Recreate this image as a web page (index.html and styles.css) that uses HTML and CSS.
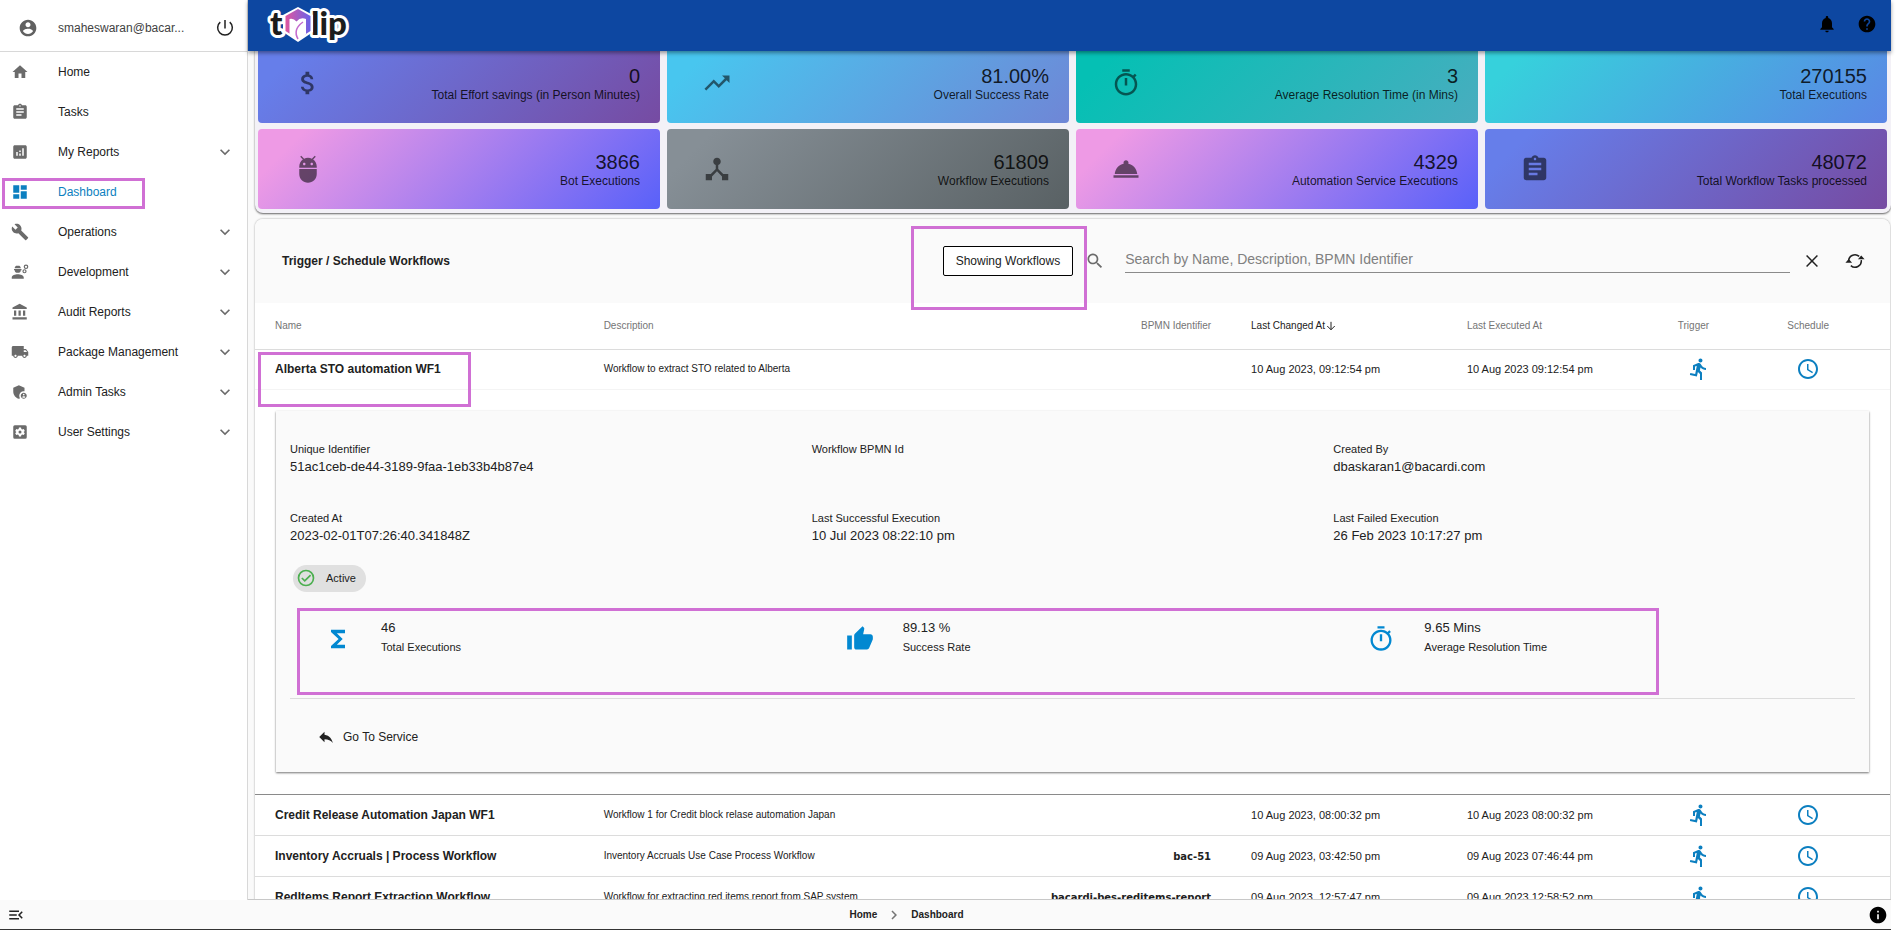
FILE: index.html
```html
<!DOCTYPE html>
<html lang="en">
<head>
<meta charset="utf-8">
<title>Dashboard</title>
<link rel="stylesheet" href="styles.css">
</head>
<body>
<svg class="sprite" aria-hidden="true">
  <symbol id="run" viewBox="0 0 24 24"><path d="M13.49 5.48c1.1 0 2-.9 2-2s-.9-2-2-2-2 .9-2 2 .9 2 2 2zm-3.6 13.9l1-4.4 2.1 2v6h2v-7.5l-2.1-2 .6-3c1.3 1.5 3.3 2.5 5.5 2.5v-2c-1.9 0-3.5-1-4.3-2.4l-1-1.6c-.4-.6-1-1-1.7-1-.3 0-.5.1-.8.1l-5.2 2.2v4.7h2v-3.4l1.8-.7-1.6 8.1-4.9-1-.4 2 7 1.4z"/></symbol>
  <symbol id="clock" viewBox="0 0 24 24"><path d="M11.99 2C6.47 2 2 6.48 2 12s4.47 10 9.99 10C17.52 22 22 17.52 22 12S17.52 2 11.99 2zM12 20c-4.42 0-8-3.58-8-8s3.58-8 8-8 8 3.58 8 8-3.58 8-8 8zm.5-13H11v6l5.25 3.15.75-1.23-4.5-2.67z"/></symbol>
  <symbol id="timer" viewBox="0 0 24 24"><path d="M15 1H9v2h6V1zm-4 13h2V8h-2v6zm8.03-6.61l1.42-1.42c-.43-.51-.9-.99-1.41-1.41l-1.42 1.42C16.07 4.74 14.12 4 12 4c-4.97 0-9 4.03-9 9s4.02 9 9 9 9-4.03 9-9c0-2.12-.74-4.07-1.97-5.61zM12 20c-3.87 0-7-3.13-7-7s3.13-7 7-7 7 3.13 7 7-3.13 7-7 7z"/></symbol>
  <symbol id="tasks" viewBox="0 0 24 24"><path d="M19 3h-4.18C14.4 1.84 13.3 1 12 1c-1.3 0-2.4.84-2.82 2H5c-1.1 0-2 .9-2 2v14c0 1.1.9 2 2 2h14c1.1 0 2-.9 2-2V5c0-1.1-.9-2-2-2zm-7 0c.55 0 1 .45 1 1s-.45 1-1 1-1-.45-1-1 .45-1 1-1zm2 14H7v-2h7v2zm3-4H7v-2h10v2zm0-4H7V7h10v2z"/></symbol>
  <symbol id="chev" viewBox="0 0 24 24"><path d="M7.4 8.6 12 13.2l4.6-4.6L18 10l-6 6-6-6z"/></symbol>
</svg>

<div class="app">
  <aside class="sidebar">
    <div class="user">
      <svg class="avatar" viewBox="0 0 24 24"><path d="M12 2C6.48 2 2 6.48 2 12s4.48 10 10 10 10-4.48 10-10S17.52 2 12 2zm0 3c1.66 0 3 1.34 3 3s-1.34 3-3 3-3-1.34-3-3 1.34-3 3-3zm0 14.2c-2.5 0-4.71-1.28-6-3.22.03-1.99 4-3.08 6-3.08 1.99 0 5.97 1.09 6 3.08-1.29 1.94-3.5 3.22-6 3.22z"/></svg>
      <span class="email">smaheswaran@bacar...</span>
      <button class="icon-btn" aria-label="Log out"><svg class="i20" viewBox="0 0 24 24"><path fill="none" stroke="currentColor" stroke-width="1.8" d="M12 2.5v10M6.3 5a8.800 8.800 0 1 0 11.400 0"/></svg></button>
    </div>
    <nav class="nav">
      <a href="#"><svg class="i18" viewBox="0 0 24 24"><path d="M10 20v-6h4v6h5v-8h3L12 3 2 12h3v8z"/></svg><span>Home</span></a>
      <a href="#"><svg class="i18"><use href="#tasks"/></svg><span>Tasks</span></a>
      <a href="#"><svg class="i18" viewBox="0 0 24 24"><path d="M19 3H5c-1.100 0-2 .9-2 2v14c0 1.100.9 2 2 2h14c1.100 0 2-.9 2-2V5c0-1.100-.9-2-2-2zM9 17H7v-5h2v5zm4 0h-2v-3h2v3zm0-5h-2v-2h2v2zm4 5h-2V7h2v10z"/></svg><span>My Reports</span><svg class="chev"><use href="#chev"/></svg></a>
      <a href="#" class="active" aria-current="page"><svg class="i18" viewBox="0 0 24 24"><path d="M3 13h8V3H3v10zm0 8h8v-6H3v6zm10 0h8V11h-8v10zm0-18v6h8V3h-8z"/></svg><span>Dashboard</span><i class="mark mark-nav"></i></a>
      <a href="#"><svg class="i18" viewBox="0 0 24 24"><path d="M22.700 19l-9.100-9.100c.9-2.300.4-5-1.500-6.900-2-2-5-2.400-7.400-1.300L9 6 6 9 1.600 4.700C.4 7.100.9 10.100 2.900 12.100c1.900 1.900 4.600 2.400 6.900 1.500l9.100 9.100c.4.4 1 .4 1.400 0l2.300-2.300c.5-.4.5-1.100.1-1.400z"/></svg><span>Operations</span><svg class="chev"><use href="#chev"/></svg></a>
      <a href="#"><svg class="i18" viewBox="0 0 24 24"><path d="M1 21v-1.800C1 16.500 5.500 15 9 15s8 1.500 8 4.200V21zM4 8h10v1.500h-1a4 3.500 0 0 1-8 0H4zM5 7c0-1.500.8-2.600 1.800-3.200h4.400C12.200 4.400 13 5.500 13 7z"/><circle cx="20" cy="5" r="2.300" fill="none" stroke="currentColor" stroke-width="1.600"/><circle cx="18" cy="11" r="2" fill="none" stroke="currentColor" stroke-width="1.600"/></svg><span>Development</span><svg class="chev"><use href="#chev"/></svg></a>
      <a href="#"><svg class="i18" viewBox="0 0 24 24"><path d="M4 10v7h3v-7H4zm6 0v7h3v-7h-3zM2 22h19v-3H2v3zm14-12v7h3v-7h-3zm-4.500-9L2 6v2h19V6l-9.500-5z"/></svg><span>Audit Reports</span><svg class="chev"><use href="#chev"/></svg></a>
      <a href="#"><svg class="i18" viewBox="0 0 24 24"><path d="M20 8h-3V4H3c-1.100 0-2 .9-2 2v11h2c0 1.660 1.340 3 3 3s3-1.340 3-3h6c0 1.660 1.340 3 3 3s3-1.340 3-3h2v-5l-3-4zM6 18.500c-.83 0-1.500-.67-1.500-1.500s.67-1.500 1.500-1.500 1.500.67 1.500 1.500-.67 1.500-1.500 1.500zm13.500-9l1.960 2.500H17V9.500h2.500zm-1.500 9c-.83 0-1.500-.67-1.500-1.500s.67-1.500 1.500-1.500 1.500.67 1.500 1.500-.67 1.500-1.500 1.500z"/></svg><span>Package Management</span><svg class="chev"><use href="#chev"/></svg></a>
      <a href="#"><svg class="i18" viewBox="0 0 24 24"><path d="M17 11c.34 0 .67.040 1 .09V6.270L10.500 3 3 6.270v4.910c0 4.540 3.200 8.790 7.500 9.820.55-.13 1.080-.32 1.600-.55-.69-.98-1.100-2.170-1.100-3.450 0-3.310 2.690-6 6-6zm0 2c-2.210 0-4 1.790-4 4s1.790 4 4 4 4-1.790 4-4-1.790-4-4-4zm0 1.380c.62 0 1.120.51 1.120 1.120s-.51 1.120-1.120 1.120-1.120-.51-1.120-1.120.5-1.120 1.120-1.120zm0 5.370c-.93 0-1.740-.46-2.240-1.170.05-.72 1.510-1.080 2.240-1.080s2.190.36 2.240 1.080c-.5.71-1.310 1.170-2.240 1.170z"/></svg><span>Admin Tasks</span><svg class="chev"><use href="#chev"/></svg></a>
      <a href="#"><svg class="i18" viewBox="0 0 24 24"><path fill-rule="evenodd" d="M5 3h14a2 2 0 0 1 2 2v14a2 2 0 0 1-2 2H5a2 2 0 0 1-2-2V5a2 2 0 0 1 2-2zm5.600 3-.4 2.100-1.200.7-2-.7-1.400 2.400L7.200 12l-1.600 1.500L7 15.900l2-.7 1.200.7.4 2.100h2.800l.4-2.100 1.200-.7 2 .7 1.400-2.400-1.600-1.500 1.600-1.500L17 8.100l-2 .7-1.200-.7-.4-2.100zM12 10a2 2 0 1 1 0 4 2 2 0 0 1 0-4z"/></svg><span>User Settings</span><svg class="chev"><use href="#chev"/></svg></a>
    </nav>
  </aside>

  <div class="main">
    <header class="topbar">
      <svg class="logo" viewBox="0 0 84 42" role="img" aria-label="tulip">
        <defs><linearGradient id="hex" x1="0" x2="1"><stop offset="0" stop-color="#e0559f"/><stop offset="1" stop-color="#6a62e8"/></linearGradient></defs>
        <g class="logo-text"><text x="3" y="31">t</text><text x="44" y="31">lip</text></g>
        <path d="M31 3 46 11v17L31 38 16 28V11z" fill="#fff"/>
        <path d="M31 5 43.500 12v15L31 35 18.500 27V12z" fill="url(#hex)"/>
        <path d="M22.500 15q4-1 7 2.500 4-5 9.500-2.500v15l-8 7-8.500-7z" fill="#fff"/>
        <path d="M31 35c-3.500-6-2-12 5-17" fill="none" stroke="#c46ccf" stroke-width="1.500"/>
      </svg>
      <div class="top-actions">
        <button class="icon-btn" aria-label="Notifications"><svg class="i20" viewBox="0 0 24 24"><path d="M12 22c1.100 0 2-.9 2-2h-4c0 1.100.89 2 2 2zm6-6v-5c0-3.070-1.640-5.640-4.500-6.320V4c0-.83-.67-1.500-1.500-1.500s-1.500.67-1.500 1.500v.68C7.630 5.360 6 7.920 6 11v5l-2 2v1h16v-1l-2-2z"/></svg></button>
        <button class="icon-btn" aria-label="Help"><svg class="i20" viewBox="0 0 24 24"><path d="M12 2C6.480 2 2 6.480 2 12s4.480 10 10 10 10-4.480 10-10S17.520 2 12 2zm1 17h-2v-2h2v2zm2.070-7.750l-.9.920C13.450 12.900 13 13.500 13 15h-2v-.5c0-1.100.45-2.100 1.170-2.830l1.240-1.260c.37-.36.59-.86.59-1.410 0-1.100-.9-2-2-2s-2 .9-2 2H8c0-2.210 1.790-4 4-4s4 1.790 4 4c0 .88-.36 1.680-.93 2.250z"/></svg></button>
      </div>
    </header>

    <main class="content">
      <section class="kpis">
        <article class="kpi g-violet"><svg viewBox="0 0 24 24"><path d="M11.800 10.900c-2.270-.59-3-1.200-3-2.150 0-1.090 1.010-1.850 2.700-1.850 1.780 0 2.440.85 2.500 2.100h2.210c-.07-1.720-1.120-3.300-3.210-3.810V3h-3v2.160c-1.940.42-3.500 1.680-3.500 3.610 0 2.310 1.910 3.460 4.700 4.130 2.500.6 3 1.480 3 2.410 0 .69-.49 1.790-2.700 1.790-2.060 0-2.870-.92-2.980-2.100h-2.200c.12 2.190 1.760 3.420 3.680 3.830V21h3v-2.150c1.950-.37 3.500-1.500 3.500-3.550 0-2.840-2.430-3.810-4.700-4.400z"/></svg><div><b>0</b><span>Total Effort savings (in Person Minutes)</span></div></article>
        <article class="kpi g-sky"><svg viewBox="0 0 24 24"><path d="M16 6l2.290 2.290-4.880 4.880-4-4L2 16.590 3.410 18l6-6 4 4 6.300-6.290L22 12V6z"/></svg><div><b>81.00%</b><span>Overall Success Rate</span></div></article>
        <article class="kpi g-teal"><svg><use href="#timer"/></svg><div><b>3</b><span>Average Resolution Time (in Mins)</span></div></article>
        <article class="kpi g-cyan"><svg></svg><div><b>270155</b><span>Total Executions</span></div></article>
        <article class="kpi g-pink"><svg viewBox="0 0 24 24"><path d="M5 16c0 3.870 3.130 7 7 7s7-3.130 7-7v-4H5v4zM16.120 4.370l2.100-2.100-.82-.83-2.300 2.310C14.160 3.280 13.120 3 12 3s-2.160.28-3.090.75L6.600 1.440l-.82.83 2.100 2.100C6.140 5.640 5 7.680 5 10v1h14v-1c0-2.320-1.140-4.360-2.880-5.630zM9 9c-.55 0-1-.45-1-1s.45-1 1-1 1 .45 1 1-.45 1-1 1zm6 0c-.55 0-1-.45-1-1s.45-1 1-1 1 .45 1 1-.45 1-1 1z"/></svg><div><b>3866</b><span>Bot Executions</span></div></article>
        <article class="kpi g-grey"><svg viewBox="0 0 24 24"><path d="M17 16l-4-4V8.820C14.160 8.400 15 7.300 15 6c0-1.660-1.340-3-3-3S9 4.340 9 6c0 1.300.84 2.400 2 2.820V12l-4 4H3v5h5v-3.050l4-4.200 4 4.200V21h5v-5h-4z"/></svg><div><b>61809</b><span>Workflow Executions</span></div></article>
        <article class="kpi g-pink"><svg viewBox="0 0 24 24"><path d="M2 17h20v2H2zm11.840-9.210c.1-.24.16-.51.16-.79 0-1.100-.9-2-2-2s-2 .9-2 2c0 .28.06.55.16.79C6.250 8.600 3.270 11.930 3 16h18c-.27-4.070-3.250-7.400-7.160-8.210z"/></svg><div><b>4329</b><span>Automation Service Executions</span></div></article>
        <article class="kpi g-violet"><svg><use href="#tasks"/></svg><div><b>48072</b><span>Total Workflow Tasks processed</span></div></article>
      </section>

      <section class="panel">
        <div class="toolbar">
          <h1>Trigger / Schedule Workflows</h1>
          <div class="toggle"><button class="outlined">Showing Workflows</button><i class="mark mark-toggle"></i></div>
          <label for="q" class="search-icon" aria-label="Search"><svg class="i20" viewBox="0 0 24 24"><path d="M15.500 14h-.79l-.28-.27C15.410 12.590 16 11.110 16 9.500 16 5.910 13.090 3 9.500 3S3 5.910 3 9.500 5.910 16 9.500 16c1.610 0 3.090-.59 4.230-1.570l.27.28v.79l5 4.990L20.490 19l-4.990-5zm-6 0C7.010 14 5 11.990 5 9.500S7.010 5 9.500 5 14 7.010 14 9.500 11.990 14 9.500 14z"/></svg></label>
          <input id="q" class="search" type="text" placeholder="Search by Name, Description, BPMN Identifier">
          <button class="icon-btn" aria-label="Clear"><svg class="i20" viewBox="0 0 24 24"><path fill="none" stroke="currentColor" stroke-width="1.800" d="M5.500 5.500l13 13M18.500 5.500l-13 13"/></svg></button>
          <button class="icon-btn" aria-label="Refresh"><svg class="i20" viewBox="0 0 24 24"><path fill="none" stroke="currentColor" stroke-width="1.800" d="M4.500 13a7.500 7.500 0 0 1 12.500-6.500M19.500 11a7.500 7.500 0 0 1-12.500 6.500"/><path d="M.5 14h8l-4-4.500zM15.500 10h8l-4-4.500z" transform="translate(0 0)"/></svg></button>
        </div>
        <table class="flows">
          <colgroup><col class="c-name"><col class="c-desc"><col class="c-bpmn"><col class="c-changed"><col class="c-exec"><col class="c-trig"><col class="c-sched"></colgroup>
          <thead><tr><th>Name</th><th>Description</th><th class="right">BPMN Identifier</th><th class="sorted">Last Changed At<svg class="sort" viewBox="0 0 12 12"><path fill="none" stroke="currentColor" stroke-width="1.200" d="M6 1v9.500M1.500 6 6 10.500 10.500 6"/></svg></th><th>Last Executed At</th><th>Trigger</th><th>Schedule</th></tr></thead>
          <tbody>
            <tr class="open"><td class="name"><span>Alberta STO automation WF1</span><i class="mark mark-name"></i></td><td class="desc">Workflow to extract STO related to Alberta</td><td class="bpmn"></td><td>10 Aug 2023, 09:12:54 pm</td><td>10 Aug 2023 09:12:54 pm</td><td><button class="act" aria-label="Trigger"><svg><use href="#run"/></svg></button></td><td><button class="act" aria-label="Schedule"><svg><use href="#clock"/></svg></button></td></tr>
            <tr class="expanded"><td colspan="7">
              <div class="detail">
                <dl class="facts">
                  <div><dt>Unique Identifier</dt><dd>51ac1ceb-de44-3189-9faa-1eb33b4b87e4</dd></div>
                  <div><dt>Workflow BPMN Id</dt><dd></dd></div>
                  <div><dt>Created By</dt><dd>dbaskaran1@bacardi.com</dd></div>
                  <div><dt>Created At</dt><dd>2023-02-01T07:26:40.341848Z</dd></div>
                  <div><dt>Last Successful Execution</dt><dd>10 Jul 2023 08:22:10 pm</dd></div>
                  <div><dt>Last Failed Execution</dt><dd>26 Feb 2023 10:17:27 pm</dd></div>
                </dl>
                <span class="chip"><svg class="i20" viewBox="0 0 24 24"><circle cx="12" cy="12" r="9" fill="none" stroke="currentColor" stroke-width="2"/><path fill="none" stroke="currentColor" stroke-width="2" d="M7 12l3.500 3.500L17.500 8.500"/></svg>Active</span>
                <div class="stats">
                  <div class="stat"><svg viewBox="0 0 24 24"><path d="M18 4H6v2l6.500 6L6 18v2h12v-3h-7l5-5-5-5h7z"/></svg><p><b>46</b><span>Total Executions</span></p></div>
                  <div class="stat"><svg viewBox="0 0 24 24"><path d="M1 21h4V9H1v12zm22-11c0-1.100-.9-2-2-2h-6.310l.95-4.570.03-.32c0-.41-.17-.79-.44-1.060L14.170 1 7.590 7.590C7.220 7.950 7 8.450 7 9v10c0 1.100.9 2 2 2h9c.83 0 1.540-.5 1.840-1.220l3.020-7.050c.09-.23.14-.47.14-.73v-2z"/></svg><p><b>89.13 %</b><span>Success Rate</span></p></div>
                  <div class="stat"><svg><use href="#timer"/></svg><p><b>9.65 Mins</b><span>Average Resolution Time</span></p></div>
                  <i class="mark mark-stats"></i>
                </div>
                <button class="goto"><svg viewBox="0 0 24 24"><path d="M10 9V5l-7 7 7 7v-4.100c5 0 8.500 1.600 11 5.100-1-5-4-10-11-11z"/></svg>Go To Service</button>
              </div>
            </td></tr>
            <tr><td class="name">Credit Release Automation Japan WF1</td><td class="desc">Workflow 1 for Credit block relase automation Japan</td><td class="bpmn"></td><td>10 Aug 2023, 08:00:32 pm</td><td>10 Aug 2023 08:00:32 pm</td><td><button class="act" aria-label="Trigger"><svg><use href="#run"/></svg></button></td><td><button class="act" aria-label="Schedule"><svg><use href="#clock"/></svg></button></td></tr>
            <tr><td class="name">Inventory Accruals | Process Workflow</td><td class="desc">Inventory Accruals Use Case Process Workflow</td><td class="bpmn">bac-51</td><td>09 Aug 2023, 03:42:50 pm</td><td>09 Aug 2023 07:46:44 pm</td><td><button class="act" aria-label="Trigger"><svg><use href="#run"/></svg></button></td><td><button class="act" aria-label="Schedule"><svg><use href="#clock"/></svg></button></td></tr>
            <tr><td class="name">RedItems Report Extraction Workflow</td><td class="desc">Workflow for extracting red items report from SAP system</td><td class="bpmn">bacardi-bes-reditems-report</td><td>09 Aug 2023, 12:57:47 pm</td><td>09 Aug 2023 12:58:52 pm</td><td><button class="act" aria-label="Trigger"><svg><use href="#run"/></svg></button></td><td><button class="act" aria-label="Schedule"><svg><use href="#clock"/></svg></button></td></tr>
          </tbody>
        </table>
      </section>
    </main>
  </div>

  <footer class="footer">
    <button class="icon-btn" aria-label="Collapse menu"><svg class="i18" viewBox="0 0 24 24"><path d="M3 18h13v-2H3v2zm0-5h10v-2H3v2zm0-7v2h13V6H3zm18 9.590L17.420 12 21 8.410 19.590 7l-5 5 5 5L21 15.590z"/></svg></button>
    <nav class="crumbs" aria-label="Breadcrumb"><a href="#">Home</a><svg class="chev crumb-sep"><use href="#chev"/></svg><a href="#">Dashboard</a></nav>
    <button class="icon-btn" aria-label="About"><svg class="i20" viewBox="0 0 24 24"><path d="M12 2C6.480 2 2 6.480 2 12s4.480 10 10 10 10-4.480 10-10S17.520 2 12 2zm1 15h-2v-6h2v6zm0-8h-2V7h2v2z"/></svg></button>
  </footer>
</div>
</body>
</html>
```

FILE: styles.css
```css
* { box-sizing: border-box; }

body {
  margin: 0;
  background: #fff;
  color: #212121;
  font: 12px/16px "Liberation Sans", Arial, sans-serif;
}

svg { fill: currentColor; flex: none; display: block; }
button { font: inherit; color: inherit; background: none; border: 0; padding: 0; }
a { color: inherit; text-decoration: none; }
.sprite { position: absolute; width: 0; height: 0; }
.i18 { width: 18px; height: 18px; }
.i20 { width: 20px; height: 20px; }
.chev { width: 20px; height: 20px; }

.mark {
  position: absolute;
  border: 3px solid #d070d4;
  pointer-events: none;
  z-index: 2;
}

.app {
  display: grid;
  grid-template-columns: 248px 1fr;
  grid-template-rows: minmax(0, 1fr) 30px;
  height: 100vh;
  margin-right: 10px;
}

/* Sidebar */
.sidebar { background: #fff; border-right: 1px solid #d8d8d8; }
.user {
  display: flex;
  align-items: center;
  height: 52px;
  padding: 4px 12px 0 18px;
  border-bottom: 1px solid #d8d8d8;
}
.avatar { width: 20px; height: 20px; color: #616161; }
.email { flex: 1; padding-left: 20px; color: #424242; }
.nav a {
  position: relative;
  display: flex;
  align-items: center;
  height: 40px;
  padding: 0 12px 0 11px;
}
.nav a span { flex: 1; padding-left: 29px; }
.nav svg { color: #6b6b6b; }
.nav .active, .nav .active svg { color: #0c7fc0; }
.mark-nav { left: 2px; top: 6px; width: 143px; height: 31px; }

/* Main column */
.main { display: flex; flex-direction: column; min-width: 0; background: #fafafa; }
.topbar {
  position: relative;
  z-index: 3;
  display: flex;
  justify-content: space-between;
  flex: none;
  height: 51px;
  padding: 4px 14px 0 19px;
  background: #0d47a1;
  box-shadow: 0 2px 4px rgba(0, 0, 0, .4);
}
.logo { width: 84px; height: 42px; }
.logo-text {
  font: 900 33px Lato, sans-serif;
  fill: #1c1c1c;
  stroke: #fff;
  stroke-width: 6px;
  stroke-linejoin: round;
  paint-order: stroke;
}
.top-actions { display: flex; align-items: center; gap: 20px; height: 40px; color: #000; }

.content { flex: 1; min-height: 0; overflow: hidden; padding-left: 7px; border-bottom: 1px solid #c8c8c8; }
.kpis {
  display: grid;
  grid-template-columns: repeat(4, 1fr);
  gap: 6px 7px;
  margin-top: -12px;
  padding: 4px 4px 4px 3px;
  background: #f3f1f7;
  border-radius: 0 0 8px 8px;
  box-shadow: 0 1px 2px rgba(0, 0, 0, .6);
}
.kpi {
  display: flex;
  align-items: center;
  justify-content: space-between;
  height: 80px;
  padding: 0 20px 0 35px;
  border-radius: 4px;
  text-align: right;
  color: rgba(0, 0, 0, .84);
}
.kpi svg { width: 30px; height: 30px; color: rgba(0, 0, 0, .55); }
.kpi div { padding-top: 2px; }
.kpi b { display: block; font: 20px/22px "Liberation Sans", Arial, sans-serif; }
.g-violet { background: linear-gradient(135deg, #667eea 10%, #764ba2); }
.g-sky { background: linear-gradient(135deg, #48c6ef 10%, #6f86d6); }
.g-teal { background: linear-gradient(135deg, #05c0b4 10%, #49adbf); }
.g-cyan { background: linear-gradient(135deg, #36d1dc 10%, #5b86e5); }
.g-pink { background: linear-gradient(135deg, #ee9ae5 10%, #5961f9); }
.g-grey { background: linear-gradient(135deg, #868f96 10%, #596164); }

.panel {
  margin: 6px 1px 0 0;
  background: #fff;
  border-radius: 8px 8px 0 0;
  box-shadow: 0 0 2px rgba(0, 0, 0, .4);
}
.toolbar {
  display: flex;
  align-items: center;
  height: 84px;
  padding: 0 25px 0 27px;
  background: #fafafa;
  border-radius: 8px 8px 0 0;
}
.toolbar h1 { flex: 1; margin: 0; font-size: 12px; }
.toggle { position: relative; }
.outlined {
  height: 30px;
  padding: 0 12px;
  border: 1px solid #000;
  border-radius: 2px;
  background: #fff;
}
.mark-toggle { left: -32px; right: -14px; top: -20px; height: 84px; }
.search-icon { padding: 0 20px 0 12px; color: #6b6b6b; }
.search {
  flex: none;
  width: 42%;
  height: 24px;
  padding: 0 0 3px;
  margin-right: 12px;
  border: 0;
  border-bottom: 1px solid #8a8a8a;
  background: none;
  font: 14px/20px "Liberation Sans", Arial, sans-serif;
}
.search::placeholder { color: #808080; opacity: 1; }
.toolbar .icon-btn + .icon-btn { margin-left: 23px; }

/* Workflow table */
.flows { width: 100%; border-collapse: collapse; table-layout: fixed; }
.c-name { width: 20.1%; }
.c-desc { width: 24%; }
.c-bpmn { width: 15.6%; }
.c-changed { width: 13.2%; }
.c-exec { width: 12.9%; }
.c-trig { width: 6.7%; }
.flows th {
  height: 46px;
  padding: 0 0 0 20px;
  text-align: left;
  font-size: 10px;
  font-weight: 400;
  color: #757575;
  white-space: nowrap;
}
.flows th.right { padding-right: 20px; text-align: right; }
.flows th.sorted { color: #212121; }
.sort { display: inline-block; width: 10px; height: 10px; margin-left: 1px; vertical-align: middle; }
.flows td { height: 41px; padding: 0 0 0 20px; font-size: 11px; white-space: nowrap; }
.flows tr { border-bottom: 1px solid #dcdcdc; }
.flows tr.open { border-bottom-color: #f4f4f4; }
.flows tr.open td { height: 40px; }
.flows td.name { position: relative; font-size: 12px; font-weight: 700; }
.mark-name { left: 3px; top: 2px; width: 213px; height: 55px; }
.flows td.desc { font-size: 10px; }
.flows td.bpmn { padding-right: 20px; text-align: right; font: 700 10px "DejaVu Sans", Verdana, sans-serif; }
.act { display: block; padding: 0 9px; color: #0c7fc0; }
.act svg { width: 24px; height: 24px; }
.flows tr.expanded { border-bottom: 1px solid #8a8a8a; }
.flows tr.expanded td { padding: 21px 21px 22px; white-space: normal; }

.detail {
  padding: 30px 14px 26px;
  background: #fafafa;
  box-shadow: 0 1px 2px rgba(0, 0, 0, .55);
}
.facts, .stats { display: grid; grid-template-columns: repeat(3, 1fr); }
.facts { margin: 0; row-gap: 33px; }
.facts dt { line-height: 16px; }
.facts dd { margin: 0; font-size: 13px; line-height: 20px; min-height: 20px; }
.chip {
  display: inline-flex;
  align-items: center;
  gap: 10px;
  height: 27px;
  margin: 19px 0 0 3px;
  padding: 0 10px 0 3px;
  border-radius: 14px;
  background: #e0e0e0;
}
.chip svg { color: #4caf50; }
.stats { position: relative; height: 107px; padding-top: 26px; border-bottom: 1px solid #dcdcdc; }
.stat { display: flex; gap: 29px; padding-left: 34px; }
.stat svg { width: 28px; height: 28px; margin-top: 7px; color: #0288d1; }
.stat p { margin: 0; }
.stat b { display: block; font: 13px/20px "Liberation Sans", Arial, sans-serif; }
.stat span { display: block; line-height: 18px; }
.mark-stats { left: 7px; top: 16px; width: 87%; height: 87px; }
.goto { display: flex; align-items: center; gap: 8px; margin: 29px 0 0 27px; font-size: 12px; }
.goto svg { width: 18px; height: 18px; }

/* Footer */
.footer {
  grid-column: 1 / -1;
  display: flex;
  align-items: center;
  justify-content: space-between;
  padding: 0 3px 0 7px;
  background: #fafafa;
  border-bottom: 1px solid #333;
}
.crumbs { display: flex; align-items: center; gap: 8px; margin-right: 80px; font-size: 10px; font-weight: 700; }
.crumb-sep { width: 18px; height: 18px; transform: rotate(-90deg); color: #757575; }
.footer .i20 { color: #000; }
```
